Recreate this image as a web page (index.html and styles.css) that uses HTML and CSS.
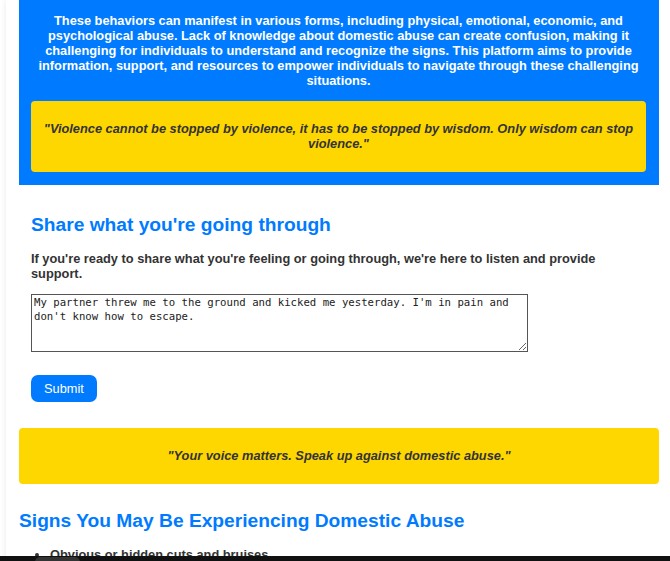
FILE: index.html
```html
<!DOCTYPE html>
<html lang="en">
<head>
<meta charset="utf-8">
<title>Domestic Abuse Support</title>
<link rel="stylesheet" href="styles.css">
</head>
<body>
<div class="container">
  <section class="intro">
    <p class="intro-text">These behaviors can manifest in various forms, including physical, emotional, economic, and psychological abuse. Lack of knowledge about domestic abuse can create confusion, making it challenging for individuals to understand and recognize the signs. This platform aims to provide information, support, and resources to empower individuals to navigate through these challenging situations.</p>
    <div class="quote quote-inner">"Violence cannot be stopped by violence, it has to be stopped by wisdom. Only wisdom can stop violence."</div>
  </section>

  <section class="share">
    <h2 class="title">Share what you're going through</h2>
    <p class="lead">If you're ready to share what you're feeling or going through, we're here to listen and provide support.</p>
    <form class="share-form">
      <textarea class="story" rows="4">My partner threw me to the ground and kicked me yesterday. I'm in pain and don't know how to escape.</textarea>
      <button type="button" class="submit">Submit</button>
    </form>
  </section>

  <div class="quote quote-wide">"Your voice matters. Speak up against domestic abuse."</div>

  <section class="signs">
    <h2 class="title">Signs You May Be Experiencing Domestic Abuse</h2>
    <ul class="sign-list">
      <li>Obvious or hidden cuts and bruises</li>
      <li>Frequent injuries explained as accidents</li>
    </ul>
  </section>
</div>
<div class="bottom-bar"><span class="bar-pill"></span></div>
</body>
</html>
```

FILE: styles.css
```css
html, body {
  margin: 0;
  padding: 0;
  background: #ffffff;
  overflow: hidden;
}

body {
  font-family: "Liberation Sans", Arial, sans-serif;
  font-size: 12.8px;
  line-height: 15px;
  color: #333333;
  font-weight: bold;
}

.container {
  margin-left: 6px;
  padding: 0 11px 0 13px;
  background: #ffffff;
  box-shadow: 0 0 6px rgba(0, 0, 0, 0.09);
  min-height: 600px;
}

.intro {
  background: #007bff;
  padding: 0 13px 13px 12px;
}

.intro-text {
  margin: 0 0 13px;
  padding-top: 13px;
  color: #ffffff;
  text-align: center;
}

.quote {
  background: #ffd700;
  border-radius: 4px;
  font-style: italic;
  text-align: center;
  color: #333333;
  padding: 20px 20px 21px;
}

.quote-inner {
  padding: 20px 10px 21px;
}

.share {
  padding: 12px 12px 26px;
}

.title {
  font-size: 19.2px;
  line-height: 22px;
  color: #007bff;
  margin: 17px 0 15px;
}

.lead {
  margin: 0 0 13px;
}

.share-form {
  display: flex;
  flex-direction: column;
  align-items: flex-start;
  gap: 23px;
}

.story {
  box-sizing: border-box;
  width: 497px;
  height: 58px;
  border: 1px solid #555555;
  padding: 1px 2px;
  font-family: "DejaVu Sans Mono", monospace;
  font-size: 10.67px;
  line-height: 14px;
  font-weight: normal;
  color: #222222;
  resize: vertical;
  margin: 0;
}

.submit {
  background: #007bff;
  color: #ffffff;
  border: none;
  border-radius: 7px;
  font-family: "Liberation Sans", Arial, sans-serif;
  font-size: 12.8px;
  font-weight: normal;
  line-height: 15px;
  padding: 6px 13px;
  height: 27px;
}

.signs .title {
  margin: 26px 0 15px;
}

.sign-list {
  margin: 0;
  padding-left: 31px;
}

.bottom-bar {
  position: fixed;
  left: 0;
  right: 0;
  bottom: 0;
  height: 5px;
  background: #111111;
}

.bar-pill {
  position: absolute;
  left: 35px;
  top: 1px;
  width: 45px;
  height: 10px;
  border-radius: 5px;
  background: #333333;
}
```
